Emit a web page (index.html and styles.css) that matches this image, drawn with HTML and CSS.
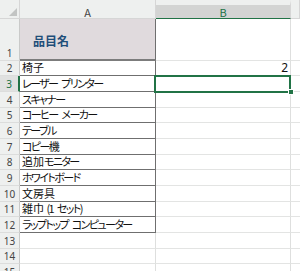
FILE: index.html
```html
<!DOCTYPE html>
<html lang="ja">
<head>
<meta charset="utf-8">
<title>Sheet</title>
<link rel="stylesheet" href="styles.css">
</head>
<body>
<div class="sheet">
  <div class="corner"><span class="tri"></span></div>
  <div class="ch">A</div>
  <div class="ch sel">B</div>
  <div class="ch"></div>

  <div class="rh">1</div>
  <div class="a title">品目名</div>
  <div class="b"></div>
  <div class="c"></div>

  <div class="rh">2</div>
  <div class="a">椅子</div>
  <div class="b num">2</div>
  <div class="c"></div>

  <div class="rh rsel">3</div>
  <div class="a"><span class="k">レーザー プリンター</span></div>
  <div class="b active"></div>
  <div class="c"></div>

  <div class="rh">4</div>
  <div class="a"><span class="k">スキャナー</span></div>
  <div class="b"></div>
  <div class="c"></div>

  <div class="rh">5</div>
  <div class="a"><span class="k">コーヒー メーカー</span></div>
  <div class="b"></div>
  <div class="c"></div>

  <div class="rh">6</div>
  <div class="a"><span class="k">テーブル</span></div>
  <div class="b"></div>
  <div class="c"></div>

  <div class="rh">7</div>
  <div class="a"><span class="k">コピー</span>機</div>
  <div class="b"></div>
  <div class="c"></div>

  <div class="rh">8</div>
  <div class="a">追加<span class="k">モニター</span></div>
  <div class="b"></div>
  <div class="c"></div>

  <div class="rh">9</div>
  <div class="a"><span class="k">ホワイトボード</span></div>
  <div class="b"></div>
  <div class="c"></div>

  <div class="rh">10</div>
  <div class="a">文房具</div>
  <div class="b"></div>
  <div class="c"></div>

  <div class="rh">11</div>
  <div class="a">雑巾 <span class="k">(1 セット)</span></div>
  <div class="b"></div>
  <div class="c"></div>

  <div class="rh">12</div>
  <div class="a"><span class="k">ラップトップ コンピューター</span></div>
  <div class="b"></div>
  <div class="c"></div>

  <div class="rh">13</div>
  <div class="e"></div>
  <div class="b"></div>
  <div class="c"></div>

  <div class="rh">14</div>
  <div class="e"></div>
  <div class="b"></div>
  <div class="c"></div>

  <div class="rh">15</div>
  <div class="e"></div>
  <div class="b"></div>
  <div class="c"></div>
</div>
</body>
</html>
```

FILE: styles.css
```css
html, body {
  margin: 0;
  padding: 0;
  background: #ffffff;
  overflow: hidden;
}

.sheet {
  display: grid;
  grid-template-columns: 20px 136px 135px 1fr;
  grid-template-rows: 19px 42px 15px 16px 16px 15px 16px 16px 15px 16px 16px 15px 16px 16px 15px 16px;
  width: 300px;
  height: 271px;
  font-family: "Noto Sans CJK JP", "Noto Sans", sans-serif;
  font-size: 11px;
  color: #111;
  font-feature-settings: "palt";
}

.sheet > div {
  box-sizing: border-box;
  min-width: 0;
  overflow: visible;
}

/* headers */
.corner {
  background: #eef0ef;
  border-right: 1px solid #d6d6d6;
  border-bottom: 1px solid #d6d6d6;
  position: relative;
}
.tri {
  position: absolute;
  right: 2px;
  bottom: 2px;
  width: 8px;
  height: 8px;
  background: #c2c4c3;
  clip-path: polygon(100% 0, 100% 100%, 0 100%);
}

.ch {
  background: #eef0ef;
  border-right: 1px solid #d6d6d6;
  border-bottom: 1px solid #d6d6d6;
  display: flex;
  align-items: center;
  justify-content: center;
  padding-top: 7px;
  font-size: 11px;
  color: #444;
  line-height: 1;
}
.ch.sel {
  border-top: 5px solid #eef0ef;
  padding-top: 2px;
  background: #d3d4d3;
  color: #217346;
  border-bottom: 1px solid #217346;
}

.rh {
  background: #eef0ef;
  border-right: 1px solid #c9cac9;
  border-bottom: 1px solid #dcdddc;
  display: flex;
  align-items: flex-end;
  justify-content: center;
  font-family: "Noto Sans", sans-serif;
  font-size: 10px;
  line-height: 14px;
  color: #444;
}
.rh.rsel {
  background: #e0e1e0;
  color: #217346;
  border-right: 2px solid #217346;
}

/* column A (table) */
.a {
  border-right: 1px solid #6f6f6f;
  border-bottom: 1px solid #6f6f6f;
  padding-left: 2px;
  display: flex;
  align-items: flex-end;
  line-height: 15px;
  white-space: pre;
}
.k {
  letter-spacing: -1.6px;
  word-spacing: 3px;
}
.a.title {
  background: #e0dadd;
  border-bottom: 2px solid #7c7c7c;
  align-items: center;
  padding-left: 13px;
  padding-top: 2px;
  font-weight: bold;
  font-size: 12px;
  color: #1f4e79;
}

.e {
  border-right: 1px solid #dedfde;
  border-bottom: 1px solid #e3e4e3;
}

/* column B */
.b {
  border-right: 1px solid #dedfde;
  border-bottom: 1px solid #e3e4e3;
  display: flex;
  align-items: flex-end;
  justify-content: flex-end;
  padding-right: 2px;
  line-height: 15px;
  position: relative;
}
.b.num {
  font-family: "Noto Sans", sans-serif;
  font-size: 12px;
}
.b.active::after {
  content: "";
  position: absolute;
  left: -2px;
  top: -1px;
  right: -1px;
  bottom: -2px;
  border: 2px solid #217346;
}
.b.active::before {
  content: "";
  position: absolute;
  right: -3px;
  bottom: -3px;
  width: 4px;
  height: 4px;
  background: #217346;
  outline: 1px solid #ffffff;
  z-index: 1;
}

.c {
  border-bottom: 1px solid #e3e4e3;
}
```
